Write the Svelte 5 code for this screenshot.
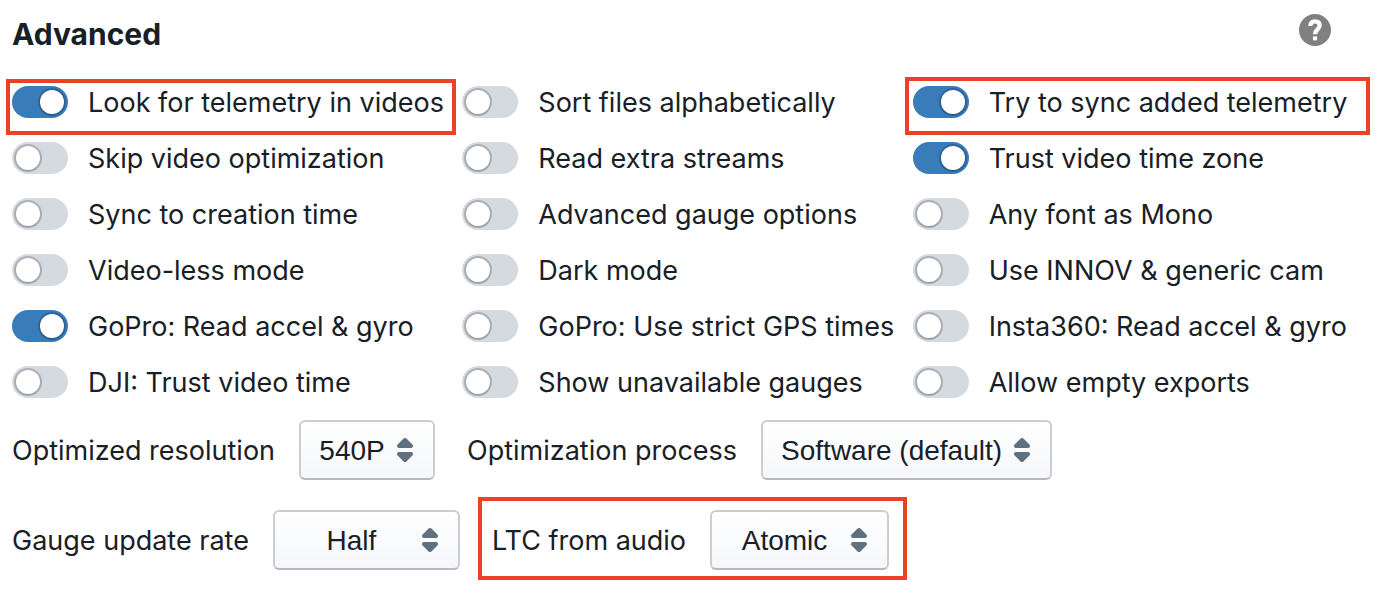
<script lang="ts">
    interface Toggle {
        label: string;
        on?: boolean;
        mark?: "first" | "last";
    }

    interface Choice {
        id: string;
        label: string;
        value: string;
        options: string[];
        mark?: boolean;
    }

    let toggles: Toggle[] = $state([
        { label: "Look for telemetry in videos", on: true, mark: "first" },
        { label: "Sort files alphabetically", on: false },
        { label: "Try to sync added telemetry", on: true, mark: "last" },
        { label: "Skip video optimization", on: false },
        { label: "Read extra streams", on: false },
        { label: "Trust video time zone", on: true },
        { label: "Sync to creation time", on: false },
        { label: "Advanced gauge options", on: false },
        { label: "Any font as Mono", on: false },
        { label: "Video-less mode", on: false },
        { label: "Dark mode", on: false },
        { label: "Use INNOV & generic cam", on: false },
        { label: "GoPro: Read accel & gyro", on: true },
        { label: "GoPro: Use strict GPS times", on: false },
        { label: "Insta360: Read accel & gyro", on: false },
        { label: "DJI: Trust video time", on: false },
        { label: "Show unavailable gauges", on: false },
        { label: "Allow empty exports", on: false },
    ]);

    let rows: Choice[][] = $state([
        [
            {
                id: "resolution",
                label: "Optimized resolution",
                value: "540P",
                options: ["540P"],
            },
            {
                id: "process",
                label: "Optimization process",
                value: "Software (default)",
                options: ["Software (default)"],
            },
        ],
        [
            {
                id: "rate",
                label: "Gauge update rate",
                value: "Half",
                options: ["Half"],
            },
            {
                id: "ltc",
                label: "LTC from audio",
                value: "Atomic",
                options: ["Atomic"],
                mark: true,
            },
        ],
    ]);
</script>

<main class="panel">
    <header>
        <h1>Advanced</h1>
        <button class="help" aria-label="Help">
            <svg viewBox="2 2 20 20" aria-hidden="true">
                <circle cx="12" cy="12" r="10" fill="#808080" />
                <path
                    d="M9.1 9.5C9.1 7.7 10.2 6.6 12 6.6s2.9 1 2.9 2.6c0 2.3-2.9 2.6-2.9 5.5"
                    fill="none"
                    stroke="#ffffff"
                    stroke-width="2.7"
                />
                <rect x="10.7" y="16" width="2.6" height="2.5" fill="#ffffff" />
            </svg>
        </button>
    </header>

    <div class="toggles">
        {#each toggles as item}
            <label
                class="toggle"
                class:mark-first={item.mark === "first"}
                class:mark-last={item.mark === "last"}
            >
                <input type="checkbox" role="switch" bind:checked={item.on} />
                <span class="text">{item.label}</span>
            </label>
        {/each}
    </div>

    <div class="choices">
        {#each rows as row}
            <div class="row">
                {#each row as choice}
                    <div class="choice" class:mark={choice.mark}>
                        <label class="text" for={choice.id}>{choice.label}</label>
                        <div class="select">
                            <select
                                id={choice.id}
                                class={choice.id}
                                bind:value={choice.value}
                            >
                                {#each choice.options as option}
                                    <option>{option}</option>
                                {/each}
                            </select>
                            <svg viewBox="0 0 16 16" aria-hidden="true">
                                <path
                                    d="M5 7h6a1.003 1.003 0 00.71-1.71l-3-3C8.53 2.11 8.28 2 8 2s-.53.11-.71.29l-3 3A1.003 1.003 0 005 7zm6 2H5a1.003 1.003 0 00-.71 1.71l3 3c.18.18.43.29.71.29s.53-.11.71-.29l3-3A1.003 1.003 0 0011 9z"
                                />
                            </svg>
                        </div>
                    </div>
                {/each}
            </div>
        {/each}
    </div>
</main>

<style>
    :global(body) {
        background: #ffffff;
    }

    .panel {
        padding: 14px 23px 40px 12px;
        color: #182026;
        font-family: Inter, "Liberation Sans", sans-serif;
        font-size: 27px;
        line-height: 30px;
    }

    header {
        display: flex;
        align-items: flex-start;
        justify-content: space-between;
        padding-right: 32px;
    }

    h1 {
        margin: 0;
        font-size: 30px;
        font-weight: 700;
        line-height: 40px;
    }

    .help {
        width: 32px;
        height: 32px;
        padding: 0;
        border: none;
        background: none;
        cursor: pointer;
    }

    .help svg {
        display: block;
    }

    .text {
        padding-top: 2px;
    }

    .toggles {
        display: grid;
        grid-template-columns: repeat(3, 1fr);
        row-gap: 24px;
        margin-top: 32px;
    }

    .toggle {
        position: relative;
        display: flex;
        align-items: center;
        gap: 20px;
        min-width: 0;
        white-space: nowrap;
        cursor: pointer;
    }

    .toggle input {
        appearance: none;
        flex: none;
        display: flex;
        align-items: center;
        width: 56px;
        height: 32px;
        margin: 0;
        padding: 0 4px;
        box-sizing: border-box;
        border-radius: 16px;
        background: #d5dae1;
        cursor: pointer;
    }

    .toggle input::before {
        content: "";
        width: 24px;
        height: 24px;
        border-radius: 50%;
        background: #ffffff;
        box-shadow:
            0 0 0 2px rgba(16, 22, 26, 0.2),
            0 1px 2px rgba(16, 22, 26, 0.2);
    }

    .toggle input:checked {
        justify-content: flex-end;
        background: #3a7bb9;
    }

    .mark-first::after,
    .mark-last::after,
    .mark::after {
        content: "";
        position: absolute;
        border: 4px solid #ea4127;
        pointer-events: none;
    }

    .mark-first::after {
        inset: -7px 6px -17px -6px;
    }

    .mark-last::after {
        inset: -9px -7px -17px -8px;
    }

    .mark::after {
        inset: -13px -18px -10px -14px;
    }

    .choices {
        display: flex;
        flex-direction: column;
        gap: 30px;
        margin-top: 22px;
    }

    .row {
        display: flex;
        gap: 32px;
    }

    .choice {
        position: relative;
        display: flex;
        align-items: center;
        gap: 24px;
        white-space: nowrap;
    }

    .select {
        position: relative;
    }

    select {
        appearance: none;
        display: block;
        height: 60px;
        padding: 0 48px 0 18px;
        border: 2px solid #cccdcf;
        border-bottom-color: #b7b9bc;
        border-radius: 6px;
        background: linear-gradient(#ffffff, #f5f7fa);
        color: #182026;
        font-family: "Liberation Sans", Arial, sans-serif;
        font-size: 28px;
        text-align: center;
        text-align-last: center;
        cursor: pointer;
    }

    .rate {
        min-width: 187px;
    }

    .ltc {
        min-width: 179px;
    }

    .select svg {
        position: absolute;
        top: 14px;
        right: 14px;
        width: 32px;
        height: 32px;
        fill: #5f7080;
        pointer-events: none;
    }
</style>
